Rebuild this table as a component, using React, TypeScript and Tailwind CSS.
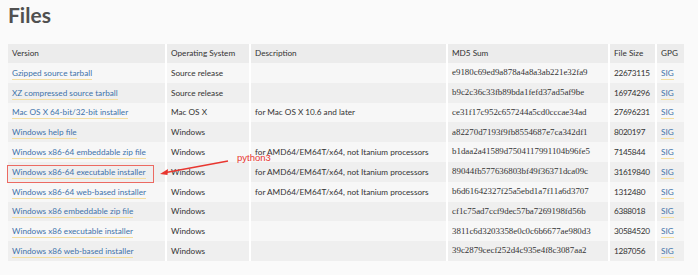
import React from 'react';

interface FileRow {
  version: string;
  os: string;
  description: string;
  md5: string;
  size: string;
}

const files: FileRow[] = [
  { version: 'Gzipped source tarball', os: 'Source release', description: '', md5: 'e9180c69ed9a878a4a8a3ab221e32fa9', size: '22673115' },
  { version: 'XZ compressed source tarball', os: 'Source release', description: '', md5: 'b9c2c36c33fb89bda1fefd37ad5af9be', size: '16974296' },
  { version: 'Mac OS X 64-bit/32-bit installer', os: 'Mac OS X', description: 'for Mac OS X 10.6 and later', md5: 'ce31f17c952c657244a5cd0cccae34ad', size: '27696231' },
  { version: 'Windows help file', os: 'Windows', description: '', md5: 'a82270d7193f9fb8554687e7ca342df1', size: '8020197' },
  { version: 'Windows x86-64 embeddable zip file', os: 'Windows', description: 'for AMD64/EM64T/x64, not Itanium processors', md5: 'b1daa2a41589d7504117991104b96fe5', size: '7145844' },
  { version: 'Windows x86-64 executable installer', os: 'Windows', description: 'for AMD64/EM64T/x64, not Itanium processors', md5: '89044fb577636803bf49f36371dca09c', size: '31619840' },
  { version: 'Windows x86-64 web-based installer', os: 'Windows', description: 'for AMD64/EM64T/x64, not Itanium processors', md5: 'b6d61642327f25a5ebd1a7f11a6d3707', size: '1312480' },
  { version: 'Windows x86 embeddable zip file', os: 'Windows', description: '', md5: 'cf1c75ad7ccf9dec57ba7269198fd56b', size: '6388018' },
  { version: 'Windows x86 executable installer', os: 'Windows', description: '', md5: '3811c6d3203358e0c0c6b6677ae980d3', size: '30584520' },
  { version: 'Windows x86 web-based installer', os: 'Windows', description: '', md5: '39c2879cecf252d4c935e4f8c3087aa2', size: '1287056' },
];

const Link: React.FC<{ children: React.ReactNode }> = ({ children }) => (
  <span className="text-[#3d72aa] border-b border-[#f3dfa2] pb-[1px]">{children}</span>
);

export default function App() {
  return (
    <div className="w-[698px] h-[275px] bg-[#fafafa] px-2 pt-[2px] font-['Lato',sans-serif] text-[8.2px] text-[#333] relative overflow-hidden">
      <h1 className="text-[21px] font-bold text-[#505050] leading-[26px]">Files</h1>

      <table className="mt-[16px] w-[676px] table-fixed border-collapse">
        <colgroup>
          <col className="w-[158px]" />
          <col className="w-[84px]" />
          <col className="w-[197px]" />
          <col className="w-[162px]" />
          <col className="w-[47px]" />
          <col className="w-[28px]" />
        </colgroup>
        <thead>
          <tr className="bg-[#ececec] h-[19px] text-left">
            <th className="font-normal pl-1">Version</th>
            <th className="font-normal pl-1 border-l-2 border-white">Operating System</th>
            <th className="font-normal pl-1 border-l-2 border-white">Description</th>
            <th className="font-normal pl-1 border-l-2 border-white">MD5 Sum</th>
            <th className="font-normal pl-1 border-l-2 border-white">File Size</th>
            <th className="font-normal pl-1 border-l-2 border-white">GPG</th>
          </tr>
        </thead>
        <tbody>
          {files.map((f, i) => (
            <tr key={f.version} className={`h-[19.8px] ${i % 2 === 0 ? 'bg-[#f7f7f7]' : 'bg-[#efefef]'}`}>
              <td className="pl-1 whitespace-nowrap"><Link>{f.version}</Link></td>
              <td className="pl-1 border-l-2 border-white whitespace-nowrap">{f.os}</td>
              <td className="pl-1 border-l-2 border-white whitespace-nowrap">{f.description}</td>
              <td className="pl-1 border-l-2 border-white whitespace-nowrap font-['Liberation_Serif',serif] text-[8.9px]">{f.md5}</td>
              <td className="pl-1 border-l-2 border-white whitespace-nowrap tracking-[-0.3px]">{f.size}</td>
              <td className="pl-1 border-l-2 border-white"><Link>SIG</Link></td>
            </tr>
          ))}
        </tbody>
      </table>

      {/* annotation on the x86-64 installer */}
      <div className="absolute left-[7px] top-[165px] w-[147px] h-[18px] border border-[#ec6a62]" />
      <svg className="absolute left-0 top-0" width="698" height="275">
        <line x1="228" y1="161" x2="166" y2="172.5" stroke="#e8362f" strokeWidth="1.4" />
        <path d="M160 174 L168 169 L167.5 175 Z" fill="#e8362f" />
      </svg>
      <span className="absolute left-[237px] top-[152px] text-[9.5px] leading-[12px] text-[#e8362f] font-['Liberation_Sans',sans-serif]">python3</span>
    </div>
  );
}
